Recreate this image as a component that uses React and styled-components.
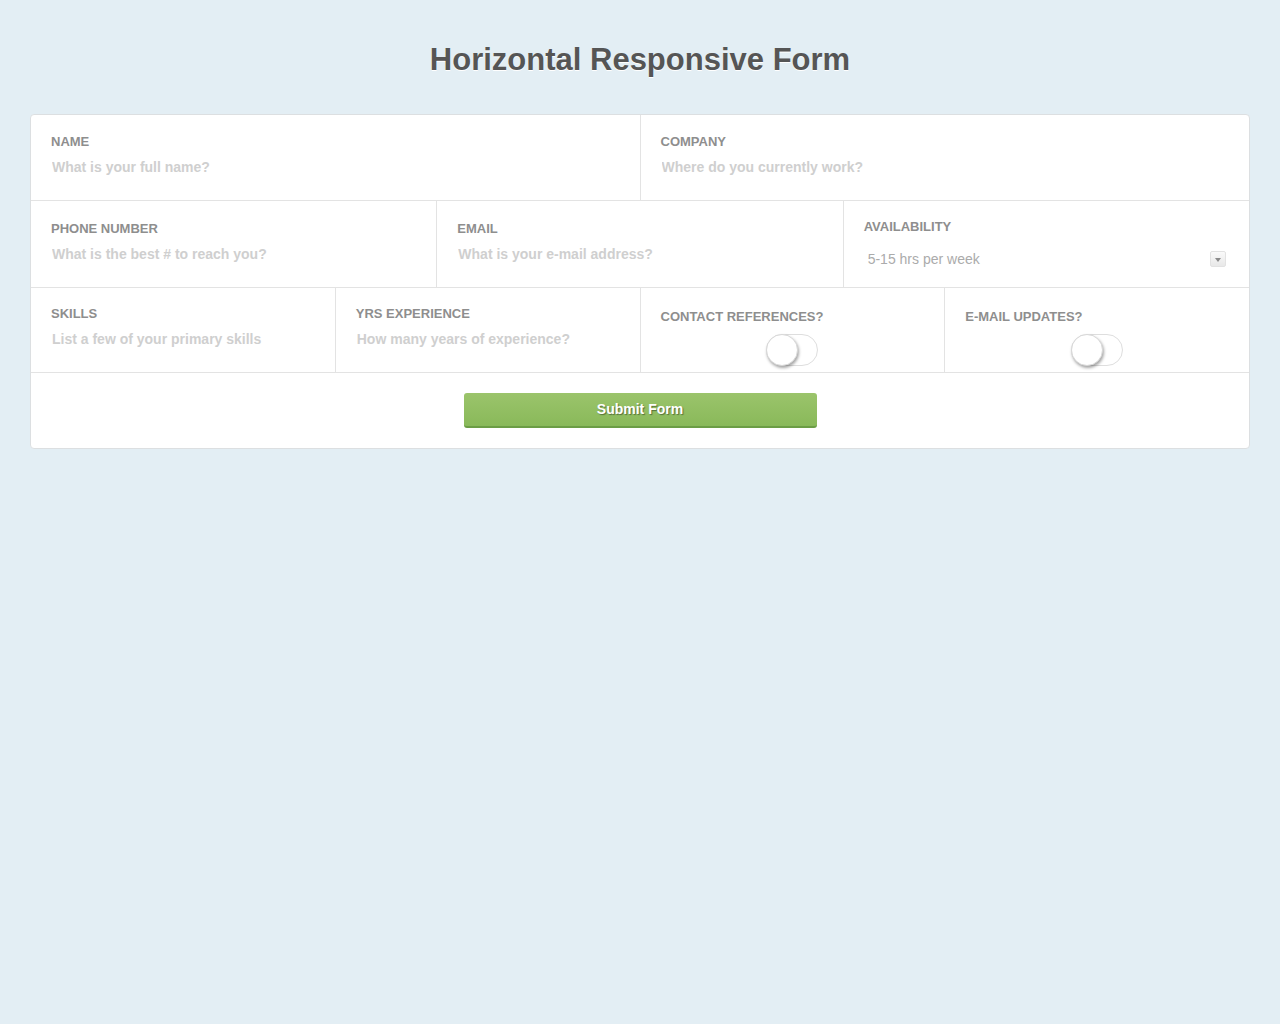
import React from "react";
import styled, { createGlobalStyle } from "styled-components";

const Global = createGlobalStyle`
  html, body { margin: 0; padding: 0; }
  body {
    background: #e3eef4;
    font-family: "Liberation Sans", Arial, Helvetica, sans-serif;
    min-height: 1024px;
  }
  * { box-sizing: border-box; }
`;

const Page = styled.div`
  padding: 41px 30px;
`;

const Title = styled.h1`
  margin: 0 0 35px;
  text-align: center;
  font-size: 31px;
  line-height: 38px;
  font-weight: 700;
  color: #555;
  text-shadow: 0 1px 0 #fff;
`;

const Card = styled.form`
  background: #fff;
  border: 1px solid #dcdfe1;
  border-radius: 4px;
  overflow: hidden;
`;

const Row = styled.div`
  display: flex;
`;

const Cell = styled.div`
  flex: 1 1 0;
  min-width: 0;
  height: ${(p) => p.$h || 86}px;
  padding: ${(p) => p.$pt || 19}px 20px 0;
  border-bottom: 1px solid #e3e3e3;
  border-right: ${(p) => (p.$last ? "none" : "1px solid #e3e3e3")};
  display: flex;
  flex-direction: column;
`;

const Label = styled.label`
  display: block;
  font-size: 13px;
  line-height: 16px;
  font-weight: 700;
  color: #8e8e8e;
  text-transform: uppercase;
`;

const Input = styled.input`
  display: block;
  width: 100%;
  margin-top: 8px;
  padding: 0 1px;
  border: none;
  outline: none;
  font-family: "Liberation Sans", Arial, Helvetica, sans-serif;
  font-size: 14px;
  line-height: 18px;
  height: 18px;
  font-weight: 700;
  color: #555;
  background: transparent;
  &::placeholder { color: #cfcfcf; opacity: 1; }
`;

const SelectBox = styled.div`
  margin-top: 15px;
  display: flex;
  align-items: center;
  justify-content: space-between;
  padding: 0 3px 0 4px;
  height: 18px;
  font-size: 14px;
  color: #ababab;
`;

const Arrow = styled.span`
  width: 16px;
  height: 16px;
  border: 1px solid #e2e2e2;
  border-radius: 2px;
  background: linear-gradient(#fafafa, #e8e8e8);
  display: flex;
  align-items: center;
  justify-content: center;
  &::after {
    content: "";
    border-left: 3.5px solid transparent;
    border-right: 3.5px solid transparent;
    border-top: 4px solid #8a8a8a;
    margin-top: 1px;
  }
`;

const ToggleWrap = styled.div`
  margin-top: 9px;
  display: flex;
  justify-content: center;
`;

const Track = styled.span`
  position: relative;
  width: 52px;
  height: 32px;
  border: 1px solid #dedede;
  border-radius: 16px;
  background: #fff;
`;

const Knob = styled.span`
  position: absolute;
  left: -1px;
  top: -1px;
  width: 32px;
  height: 32px;
  border-radius: 50%;
  background: #fff;
  border: 1px solid #d8d8d8;
  box-shadow: 1px 2px 3px rgba(0, 0, 0, 0.35);
`;

const Footer = styled.div`
  padding: 20px 0 20px;
  display: flex;
  justify-content: center;
`;

const Button = styled.button`
  width: 353px;
  height: 35px;
  border: none;
  border-bottom: 2px solid #6b9d45;
  border-radius: 3px;
  background: linear-gradient(#9bc46b, #89b95a);
  color: #fff;
  font-family: "Liberation Sans", Arial, Helvetica, sans-serif;
  font-size: 14px;
  font-weight: 700;
  text-shadow: 1px 1px 1px rgba(60, 80, 40, 0.7);
  cursor: pointer;
  padding: 0 0 1px;
`;

function Field({ label, placeholder, last, h, pt }) {
  return (
    <Cell $last={last} $h={h} $pt={pt}>
      <Label>{label}</Label>
      <Input placeholder={placeholder} />
    </Cell>
  );
}

function Toggle({ label, last }) {
  return (
    <Cell $last={last} $h={85} $pt={21}>
      <Label>{label}</Label>
      <ToggleWrap>
        <Track>
          <Knob />
        </Track>
      </ToggleWrap>
    </Cell>
  );
}

export default function App() {
  return (
    <Page>
      <Global />
      <Title>Horizontal Responsive Form</Title>
      <Card onSubmit={(e) => e.preventDefault()}>
        <Row>
          <Field label="Name" placeholder="What is your full name?" />
          <Field label="Company" placeholder="Where do you currently work?" last />
        </Row>
        <Row>
          <Field label="Phone Number" placeholder="What is the best # to reach you?" h={87} pt={20} />
          <Field label="Email" placeholder="What is your e-mail address?" h={87} pt={20} />
          <Cell $last $h={87} $pt={18}>
            <Label>Availability</Label>
            <SelectBox>
              <span>5-15 hrs per week</span>
              <Arrow />
            </SelectBox>
          </Cell>
        </Row>
        <Row>
          <Field label="Skills" placeholder="List a few of your primary skills" h={85} pt={18} />
          <Field label="Yrs Experience" placeholder="How many years of experience?" h={85} pt={18} />
          <Toggle label="Contact References?" />
          <Toggle label="E-mail Updates?" last />
        </Row>
        <Footer>
          <Button type="submit">Submit Form</Button>
        </Footer>
      </Card>
    </Page>
  );
}
